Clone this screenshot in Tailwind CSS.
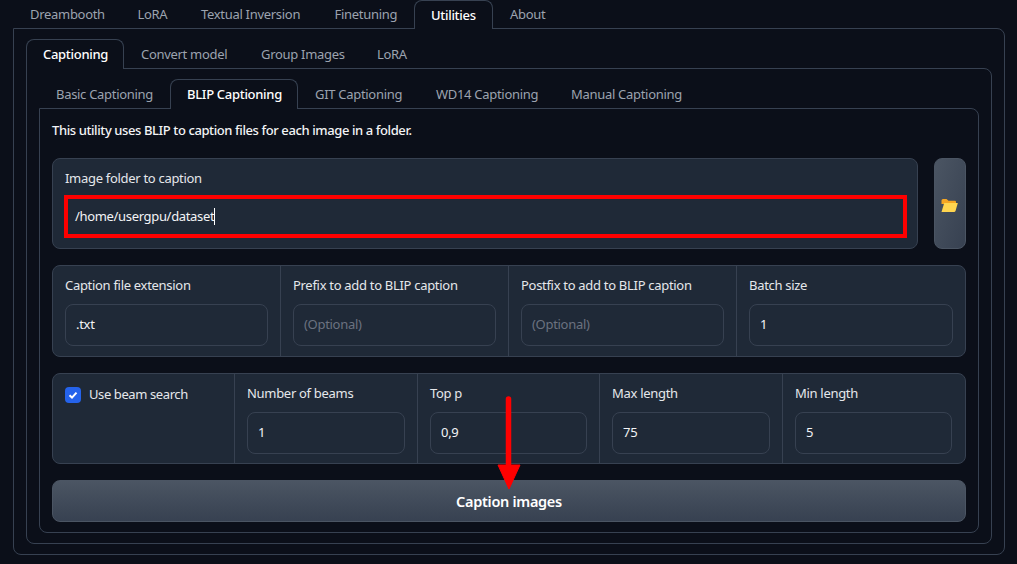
<!DOCTYPE html>
<html>
<head>
<meta charset="utf-8">
<script src="https://cdn.jsdelivr.net/npm/@tailwindcss/browser@4"></script>
</head>
<body class="m-0 bg-[#0b0f19] font-['Noto_Sans','Liberation_Sans',sans-serif] text-[13px] tracking-[-0.3px] text-[#f3f4f6]">
<div class="relative h-[564px] w-[1017px] overflow-hidden pl-[13px] pr-[12px]">
  <div class="flex h-7 text-[#9ca3af]">
    <div class="w-[107.5px] pl-[17px] leading-[29px]">Dreambooth</div>
    <div class="w-[63.5px] pl-[17px] leading-[29px]">LoRA</div>
    <div class="w-[133.5px] pl-[17px] leading-[29px]">Textual Inversion</div>
    <div class="w-[96.5px] pl-[17px] leading-[29px]">Finetuning</div>
    <div class="relative z-10 mb-[-1px] h-[29px] w-[79px] rounded-t-lg border border-b-0 border-[#374151] bg-[#0b0f19] pl-4 leading-[28px] font-medium text-white">Utilities</div>
    <div class="pl-[17px] leading-[29px]">About</div>
  </div>
  <div class="h-[527px] rounded-b-lg rounded-tr-lg border border-[#374151] px-3 pt-[10px]">
    <div class="flex h-[30px] text-[#9ca3af]">
      <div class="relative z-10 h-[30px] w-[98px] rounded-t-lg border border-b-0 border-[#374151] bg-[#0b0f19] pl-4 leading-[29px] font-medium text-white">Captioning</div>
      <div class="w-[120px] pl-[17px] leading-[30px]">Convert model</div>
      <div class="w-[116px] pl-[17px] leading-[30px]">Group Images</div>
      <div class="pl-[17px] leading-[30px]">LoRA</div>
    </div>
    <div class="mt-[-1px] h-[476px] rounded-b-lg rounded-tr-lg border border-[#374151] px-3 pt-[10px]">
      <div class="flex h-[30px] text-[#9ca3af]">
        <div class="w-[131px] pl-[17px] leading-[30px]">Basic Captioning</div>
        <div class="relative z-10 h-[30px] w-[128px] rounded-t-lg border border-b-0 border-[#374151] bg-[#0b0f19] pl-4 leading-[29px] font-medium text-white">BLIP Captioning</div>
        <div class="w-[121px] pl-[17px] leading-[30px]">GIT Captioning</div>
        <div class="w-[135px] pl-[17px] leading-[30px]">WD14 Captioning</div>
        <div class="pl-[17px] leading-[30px]">Manual Captioning</div>
      </div>
      <div class="mt-[-1px] h-[425px] rounded-b-lg rounded-tr-lg border border-[#374151] px-3">
        <p class="h-[49px] pt-[11px] leading-[21px] font-medium tracking-[-0.4px] text-[#f3f4f6]">This utility uses BLIP to caption files for each image in a folder.</p>
        <div class="flex gap-4">
          <div class="h-[91px] w-[866px] rounded-lg border border-[#374151] bg-[#1f2937] pl-[11px] pr-[10px] pt-[9px]">
            <div class="h-[27px] pl-px leading-[21px] text-[#e5e7eb]">Image folder to caption</div>
            <div class="flex h-[43px] w-[843px] items-center border-4 border-[#ff0000] pl-[7px] tracking-[-0.33px] text-[#f3f4f6]">/home/usergpu/dataset<span class="h-[17px] w-px bg-white"></span></div>
          </div>
          <div class="flex h-[91px] w-8 items-center justify-center rounded-lg border border-[#4b5563] bg-gradient-to-br from-[#4b5563] to-[#374151]">
            <svg class="mt-[3px] mr-[2px]" width="17" height="15" viewBox="0 0 17 15"><path d="M0.500 2.500Q0.500 1 2 1H5.500L7.500 2.700H14Q15 2.700 15 4V6H0.500Z" fill="#f5a623"/><path d="M0.500 14L3.200 5H16.800L14.500 13Q14.200 14 13 14Z" fill="#ffd54f"/></svg>
          </div>
        </div>
        <div class="mt-4 flex h-[92px] w-[914px] rounded-lg border border-[#374151] bg-[#1f2937]">
          <div class="w-[228px] px-3 pt-[9px]">
            <div class="h-[29px] leading-[21px] text-[#e5e7eb]">Caption file extension</div>
            <div class="h-[42px] w-[203px] rounded-lg border border-[#374151] px-[10px] leading-[38px]">.txt</div>
          </div>
          <div class="w-[228px] border-l border-[#374151] px-3 pt-[9px]">
            <div class="h-[29px] leading-[21px] text-[#e5e7eb]">Prefix to add to BLIP caption</div>
            <div class="h-[42px] w-[203px] rounded-lg border border-[#374151] px-[10px] leading-[38px] text-[#6b7280]">(Optional)</div>
          </div>
          <div class="w-[228px] border-l border-[#374151] px-3 pt-[9px]">
            <div class="h-[29px] leading-[21px] text-[#e5e7eb]">Postfix to add to BLIP caption</div>
            <div class="h-[42px] w-[203px] rounded-lg border border-[#374151] px-[10px] leading-[38px] text-[#6b7280]">(Optional)</div>
          </div>
          <div class="flex-1 border-l border-[#374151] px-3 pt-[9px]">
            <div class="h-[29px] leading-[21px] text-[#e5e7eb]">Batch size</div>
            <div class="h-[42px] w-[204px] rounded-lg border border-[#374151] px-[10px] leading-[38px]">1</div>
          </div>
        </div>
        <div class="mt-4 flex h-[91px] w-[914px] rounded-lg border border-[#374151] bg-[#1f2937]">
          <div class="flex h-fit w-[181px] items-center gap-2 pl-3 pt-[12px]">
            <span class="flex h-4 w-4 items-center justify-center rounded-[4px] bg-[#2563eb]">
              <svg width="12" height="12" viewBox="0 0 12 12"><path d="M2.500 6.300L5 8.600L9.500 3.600" fill="none" stroke="#fff" stroke-width="2"/></svg>
            </span>
            <span class="leading-[17px] tracking-[-0.4px] text-[#e5e7eb]">Use beam search</span>
          </div>
          <div class="w-[183px] border-l border-[#374151] px-3 pt-[9px]">
            <div class="h-[29px] leading-[21px] text-[#e5e7eb]">Number of beams</div>
            <div class="h-[42px] w-[158px] rounded-lg border border-[#374151] px-[10px] leading-[38px]">1</div>
          </div>
          <div class="w-[182px] border-l border-[#374151] px-3 pt-[9px]">
            <div class="h-[29px] leading-[21px] text-[#e5e7eb]">Top p</div>
            <div class="h-[42px] w-[157px] rounded-lg border border-[#374151] px-[10px] leading-[38px]">0,9</div>
          </div>
          <div class="w-[183px] border-l border-[#374151] px-3 pt-[9px]">
            <div class="h-[29px] leading-[21px] text-[#e5e7eb]">Max length</div>
            <div class="h-[42px] w-[158px] rounded-lg border border-[#374151] px-[10px] leading-[38px]">75</div>
          </div>
          <div class="flex-1 border-l border-[#374151] px-3 pt-[9px]">
            <div class="h-[29px] leading-[21px] text-[#e5e7eb]">Min length</div>
            <div class="h-[42px] w-[157px] rounded-lg border border-[#374151] px-[10px] leading-[38px]">5</div>
          </div>
        </div>
        <div class="mt-4 flex h-[42px] w-[914px] items-center justify-center rounded-lg border border-[#4b5563] bg-gradient-to-b from-[#4b5563] to-[#374151] pt-[2px] text-[14.5px] font-semibold text-white">Caption images</div>
      </div>
    </div>
  </div>
  <svg class="absolute left-[490px] top-[390px]" width="40" height="105" viewBox="0 0 40 105">
    <path d="M18.500 9V76" stroke="#ff0000" stroke-width="5.500" stroke-linecap="round" fill="none"/>
    <path d="M8 75H30L19 99Z" fill="#ff0000" stroke="#ff0000" stroke-linejoin="round"/>
  </svg>
</div>
</body>
</html>
